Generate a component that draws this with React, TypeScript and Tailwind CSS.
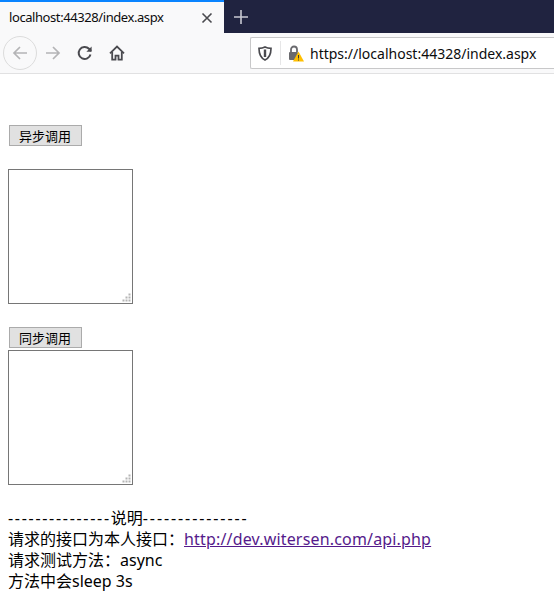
const CJK = `font-["Noto_Sans","Noto_Sans_CJK_SC",sans-serif]`;

function Grip() {
  return (
    <svg width="9" height="9" viewBox="0 0 9 9" className="absolute right-[1px] bottom-[1px]" fill="#b5b5b5">
      <rect x="6.5" y="0.5" width="2" height="2" />
      <rect x="3.5" y="3.5" width="2" height="2" />
      <rect x="6.5" y="3.5" width="2" height="2" />
      <rect x="0.5" y="6.5" width="2" height="2" />
      <rect x="3.5" y="6.5" width="2" height="2" />
      <rect x="6.5" y="6.5" width="2" height="2" />
    </svg>
  );
}

function Box() {
  return (
    <div className="relative w-[125px] h-[135px] border border-[#767676] bg-white">
      <Grip />
    </div>
  );
}

function PageButton({ label }: { label: string }) {
  return (
    <button className="ml-[1px] w-[73px] h-[21px] flex items-center justify-center border border-[#ababab] bg-[#e1e1e1] text-[13px] leading-none text-black font-['Noto_Sans_CJK_SC',sans-serif] pr-[1px]">
      {label}
    </button>
  );
}

export default function App() {
  return (
    <div className="w-[554px] h-[607px] overflow-hidden bg-white text-black">
      {/* tab strip */}
      <div className="h-[33px] flex bg-[#202340]">
        <div className="w-[224px] shrink-0 bg-[#f9f9fa] border-t-2 border-[#0a84ff] flex items-center pl-[9px] pr-[11px] justify-between">
          <span className="text-[13px] text-[#0c0c0d] font-['Noto_Sans',sans-serif] tracking-[-0.42px]">localhost:44328/index.aspx</span>
          <svg width="12" height="12" viewBox="0 0 12 12" stroke="#4a4a4f" strokeWidth="1.6" fill="none">
            <path d="M1.500 1.500 10.500 10.500M10.500 1.500 1.500 10.500" />
          </svg>
        </div>
        <div className="w-[34px] flex items-center justify-center">
          <svg width="14" height="14" viewBox="0 0 14 14" stroke="#c8c9d2" strokeWidth="1.6" fill="none">
            <path d="M7 0v14M0 7h14" />
          </svg>
        </div>
      </div>

      {/* toolbar */}
      <div className="h-[41px] flex items-center bg-[#f9f9fa] border-b border-[#e1e1e2]">
        <div className="ml-[3px] shrink-0 w-[34px] h-[34px] rounded-full border border-[#dcdcdc] flex items-center justify-center">
          <svg width="16" height="16" viewBox="0 0 16 16" stroke="#b4b4b6" strokeWidth="1.7" fill="none">
            <path d="M15 8H2M8 2 2 8l6 6" />
          </svg>
        </div>
        <svg className="ml-[8px] shrink-0" width="16" height="16" viewBox="0 0 16 16" stroke="#b4b4b6" strokeWidth="1.7" fill="none">
          <path d="M1 8h13M8 2l6 6-6 6" />
        </svg>
        <svg className="ml-[16px] shrink-0" width="16" height="16" viewBox="0 0 16 16" stroke="#4a4a4f" strokeWidth="2" fill="none">
          <path d="M13.500 9.500A6 6 0 1 1 12 3.800L14 6" />
          <path d="M14.600 1.500v5.200H9.400" fill="#4a4a4f" stroke="none" />
        </svg>
        <svg className="ml-[16px] shrink-0" width="16" height="16" viewBox="0 0 16 16" fill="none" stroke="#4a4a4f" strokeWidth="1.8">
          <path d="M1 8.300 8 1.600l7 6.700" />
          <path d="M3.200 7v7.600h3.300v-4h3v4h3.300V7" />
        </svg>
        <div className="ml-[125px] flex-1 min-w-0 h-[32px] flex items-center bg-white border border-[#c8c8c9] border-r-0 rounded-l-[2px] overflow-hidden">
          <svg className="ml-[7px] shrink-0" width="14" height="15" viewBox="0 0 14 15" fill="none">
            <path d="M7 1c2 1 4 1.300 6 1.300 0 6-1.500 9.700-6 11.700C2.500 12 1 8.300 1 2.300 3 2.300 5 2 7 1Z" stroke="#4a4a4f" strokeWidth="1.700" />
            <path d="M7 3.500v7.500" stroke="#4a4a4f" strokeWidth="2.400" />
          </svg>
          <div className="ml-[8px] w-[1px] h-[24px] bg-[#e6e6e7] shrink-0" />
          <div className="ml-[7px] w-[16px] h-[17px] shrink-0">
            <svg width="16" height="17" viewBox="0 0 16 17" fill="none">
              <path d="M3 7V4.500a3 3 0 0 1 6 0V7" stroke="#6a6a6e" strokeWidth="1.800" />
              <rect x="1" y="7" width="9" height="8" rx="1" fill="#6a6a6e" />
              <path d="M10.500 6.500 16 16.500H5Z" fill="#ffbf00" />
              <path d="M10.500 10v3.500M10.500 14.500v1" stroke="#3b3b3b" strokeWidth="1" />
            </svg>
          </div>
          <span className="ml-[6px] text-[14px] text-[#0c0c0d] font-['Noto_Sans',sans-serif] whitespace-nowrap">https://localhost:44328/index.aspx</span>
        </div>
      </div>

      {/* page */}
      <div className={`pl-[8px] flex flex-col items-start text-[16px] leading-[21px] ${CJK}`}>
        <div className="h-[51px]" />
        <PageButton label="异步调用" />
        <div className="h-[23px]" />
        <Box />
        <div className="h-[23px]" />
        <PageButton label="同步调用" />
        <div className="h-[2px]" />
        <Box />
        <div className="h-[23px]" />
        <div>
          <span className="tracking-[1.7px]">---------------</span>说明<span className="tracking-[1.9px]">---------------</span>
        </div>
        <div>
          请求的接口为本人接口：<a href="#" className="text-[#551a8b] underline tracking-[0.17px]">http://dev.witersen.com/api.php</a>
        </div>
        <div>请求测试方法：async</div>
        <div>方法中会sleep 3s</div>
      </div>
    </div>
  );
}
